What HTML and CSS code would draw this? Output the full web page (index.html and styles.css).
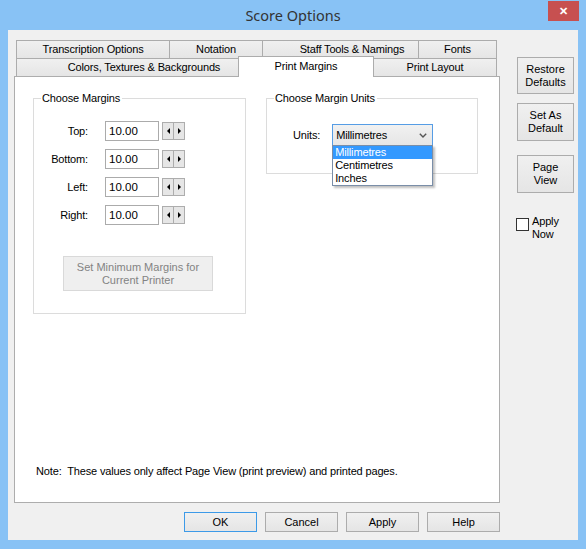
FILE: index.html
```html
<!DOCTYPE html>
<html>
<head>
<meta charset="UTF-8">
<title>Score Options</title>
<link rel="stylesheet" href="styles.css">
</head>
<body>
<div class="window">
    <div class="titlebar">
        <span></span>
        <span class="title">Score Options</span>
        <span class="close">&#x2715;</span>
    </div>
    <div class="client">
        <div class="top">
            <div class="tabs">
                <!-- back row -->
                <div class="tab-row">
                    <div class="tab t-trans">Transcription Options</div>
                    <div class="tab t-notation">Notation</div>
                    <div class="tab t-staff">Staff Tools &amp; Namings</div>
                    <div class="tab t-fonts">Fonts</div>
                </div>
                <!-- front row -->
                <div class="tab-row">
                    <div class="tab t-colors">Colors, Textures &amp; Backgrounds</div>
                    <div class="tab t-margins active">Print Margins</div>
                    <div class="tab t-layout">Print Layout</div>
                </div>
                <div class="panel">
                    <div class="groups">
                        <fieldset class="group margins">
                            <legend>Choose Margins</legend>
                            <div class="fields">
                                <div class="field"><label>Top:</label><input class="num" value="10.00" readonly><span class="spin"><span class="spin-l"></span><span class="spin-r"></span></span></div>
                                <div class="field"><label>Bottom:</label><input class="num" value="10.00" readonly><span class="spin"><span class="spin-l"></span><span class="spin-r"></span></span></div>
                                <div class="field"><label>Left:</label><input class="num" value="10.00" readonly><span class="spin"><span class="spin-l"></span><span class="spin-r"></span></span></div>
                                <div class="field"><label>Right:</label><input class="num" value="10.00" readonly><span class="spin"><span class="spin-l"></span><span class="spin-r"></span></span></div>
                            </div>
                            <button class="btn min-btn" disabled>Set Minimum Margins for<br>Current Printer</button>
                        </fieldset>
                        <fieldset class="group units">
                            <legend>Choose Margin Units</legend>
                            <div class="unit-row">
                                <label>Units:</label>
                                <div class="combo">
                                    <span class="combo-val">Millimetres</span>
                                    <svg class="chev" width="8" height="5" viewBox="0 0 8 5"><path d="M0.8 0.8 L4 4 L7.2 0.8" fill="none" stroke="#555" stroke-width="1.4"/></svg>
                                    <ul class="combo-list">
                                        <li class="sel">Millimetres</li>
                                        <li>Centimetres</li>
                                        <li>Inches</li>
                                    </ul>
                                </div>
                            </div>
                        </fieldset>
                    </div>
                    <p class="note">Note:&nbsp; These values only affect Page View (print preview) and printed pages.</p>
                </div>
            </div>
            <div class="side">
                <button class="btn side-btn restore">Restore<br>Defaults</button>
                <button class="btn side-btn setdef">Set As<br>Default</button>
                <button class="btn side-btn pageview">Page<br>View</button>
                <label class="apply"><span class="box"></span><span class="apply-text">Apply<br>Now</span></label>
            </div>
        </div>
        <div class="actions">
            <button class="btn act default">OK</button>
            <button class="btn act">Cancel</button>
            <button class="btn act">Apply</button>
            <button class="btn act">Help</button>
        </div>
    </div>
</div>
</body>
</html>
```

FILE: styles.css
```css
* {
	margin: 0;
	padding: 0;
	box-sizing: border-box;
}
body {
	font-family: "Liberation Sans", Arial, sans-serif;
	font-size: 11px;
	letter-spacing: -0.15px;
	color: #000;
	background: #88c2f5;
}
.window {
	width: 586px;
	height: 549px;
	background: #88c2f5;
	display: flex;
	flex-direction: column;
	padding-bottom: 9px;
}
.titlebar {
	height: 30px;
	display: grid;
	grid-template-columns: 1fr auto 1fr;
	align-items: center;
}
.title {
	font-family: "Noto Sans", "Open Sans", sans-serif;
	font-size: 14.5px;
	letter-spacing: 0;
	color: #333;
}
.close {
	justify-self: end;
	align-self: start;
	width: 31px;
	height: 20px;
	margin: 1px 7px 0 0;
	background: #c75050;
	color: #fff;
	font-size: 11px;
	font-weight: bold;
	text-align: center;
	line-height: 20px;
}
.client {
	flex: 1;
	margin: 0 8px;
	background: #f0f0f0;
	padding: 10px 4px 8px 6px;
	display: flex;
	flex-direction: column;
}
.top {
	display: flex;
	gap: 17px;
}
.tabs {
	width: 486px;
}
.tab-row {
	display: flex;
	height: 18px;
	margin: 0 3px 0 2px;
	align-items: flex-start;
}
.tab {
	height: 18px;
	border: 1px solid #acacac;
	border-bottom: none;
	margin-right: -1px;
	background: linear-gradient(#f0f0f0, #e5e5e5);
	text-align: center;
	line-height: 17px;
	white-space: nowrap;
}
.t-trans { width: 154px; }
.t-notation { width: 94px; }
.t-staff { width: 157px; padding-left: 23px; }
.t-fonts { width: 79px; margin-right: 0; }
.t-colors { width: 223px; padding-left: 33px; }
.t-margins { width: 136px; }
.t-layout { width: 124px; margin-right: 0; }
.tab.active {
	position: relative;
	z-index: 1;
	height: 21px;
	margin-top: -2px;
	background: #fff;
	line-height: 19px;
	padding-bottom: 2px;
}
.panel {
	height: 427px;
	background: #fff;
	border: 1px solid #adadad;
	padding: 15px 0 0 18px;
	display: flex;
	flex-direction: column;
}
.groups {
	display: flex;
	gap: 20px;
	align-items: flex-start;
}
.group {
	border: 1px solid #dcdcdc;
	padding: 0 7px;
	min-width: 0;
}
.group legend {
	padding: 0 2px 0 1px;
	line-height: 13px;
}
.margins {
	width: 213px;
	height: 222px;
}
.units {
	width: 212px;
	height: 82px;
}
.fields {
	display: flex;
	flex-direction: column;
	gap: 8px;
	padding-top: 16px;
}
.field {
	display: flex;
	align-items: center;
	height: 20px;
}
.field label {
	width: 47px;
	text-align: right;
	margin-right: 17px;
}
.num {
	width: 54px;
	height: 20px;
	border: 1px solid #ababab;
	font: inherit;
	font-size: 11.5px;
	padding-left: 3px;
	color: #000;
	outline: none;
}
.spin {
	display: flex;
	margin-left: 3px;
	height: 18px;
}
.spin-l, .spin-r {
	width: 12px;
	height: 18px;
	border: 1px solid #adadad;
	background: #e6e6e6;
	display: flex;
	align-items: center;
	justify-content: center;
}
.spin-r {
	margin-left: -1px;
}
.spin-l::before {
	content: "";
	border-right: 3px solid #000;
	border-top: 3px solid transparent;
	border-bottom: 3px solid transparent;
}
.spin-r::before {
	content: "";
	border-left: 3px solid #000;
	border-top: 3px solid transparent;
	border-bottom: 3px solid transparent;
}
.btn {
	font: inherit;
	color: #000;
	border: 1px solid #acacac;
	background: linear-gradient(#f0f0f0, #e5e5e5);
	line-height: 13px;
	text-align: center;
}
.min-btn {
	display: block;
	width: 150px;
	height: 35px;
	margin: 31px 0 0 22px;
	color: #838383;
	background: #efefef;
	border-color: #d9d9d9;
}
.unit-row {
	display: flex;
	align-items: center;
	gap: 12px;
	padding: 19px 0 0 19px;
}
.combo {
	position: relative;
	width: 101px;
	height: 22px;
	border: 1px solid #569de5;
	background: linear-gradient(#f1f1f1, #e6e6e6);
	display: flex;
	align-items: center;
	justify-content: space-between;
	padding: 0 5px 0 3px;
}
.combo-list {
	position: absolute;
	top: 20px;
	left: -1px;
	width: 101px;
	list-style: none;
	background: #fff;
	border: 1px solid #7a8ea8;
	box-shadow: 2px 2px 2px rgba(0, 0, 0, 0.25);
	z-index: 2;
}
.combo-list li {
	height: 13px;
	line-height: 13px;
	padding-left: 2px;
}
.combo-list li.sel {
	background: #3399ff;
	color: #fff;
}
.note {
	margin: auto 0 24px 3px;
	line-height: 13px;
}
.side {
	width: 57px;
	padding-top: 17px;
	display: flex;
	flex-direction: column;
}
.side-btn {
	width: 57px;
	height: 38px;
}
.restore { height: 37px; }
.setdef { margin-top: 9px; }
.pageview { margin-top: 14px; }
.apply {
	display: flex;
	margin: 25px 0 0 -1px;
	line-height: 13px;
	gap: 3px;
}
.apply .box {
	width: 13px;
	height: 13px;
	border: 1px solid #333;
	background: #fff;
}
.apply-text {
	margin-top: -3px;
}
.actions {
	width: 486px;
	margin-top: 9px;
	display: flex;
	justify-content: flex-end;
	gap: 8px;
}
.act {
	width: 73px;
	height: 20px;
}
.act.default {
	border-color: #3c9ae8;
}
```
